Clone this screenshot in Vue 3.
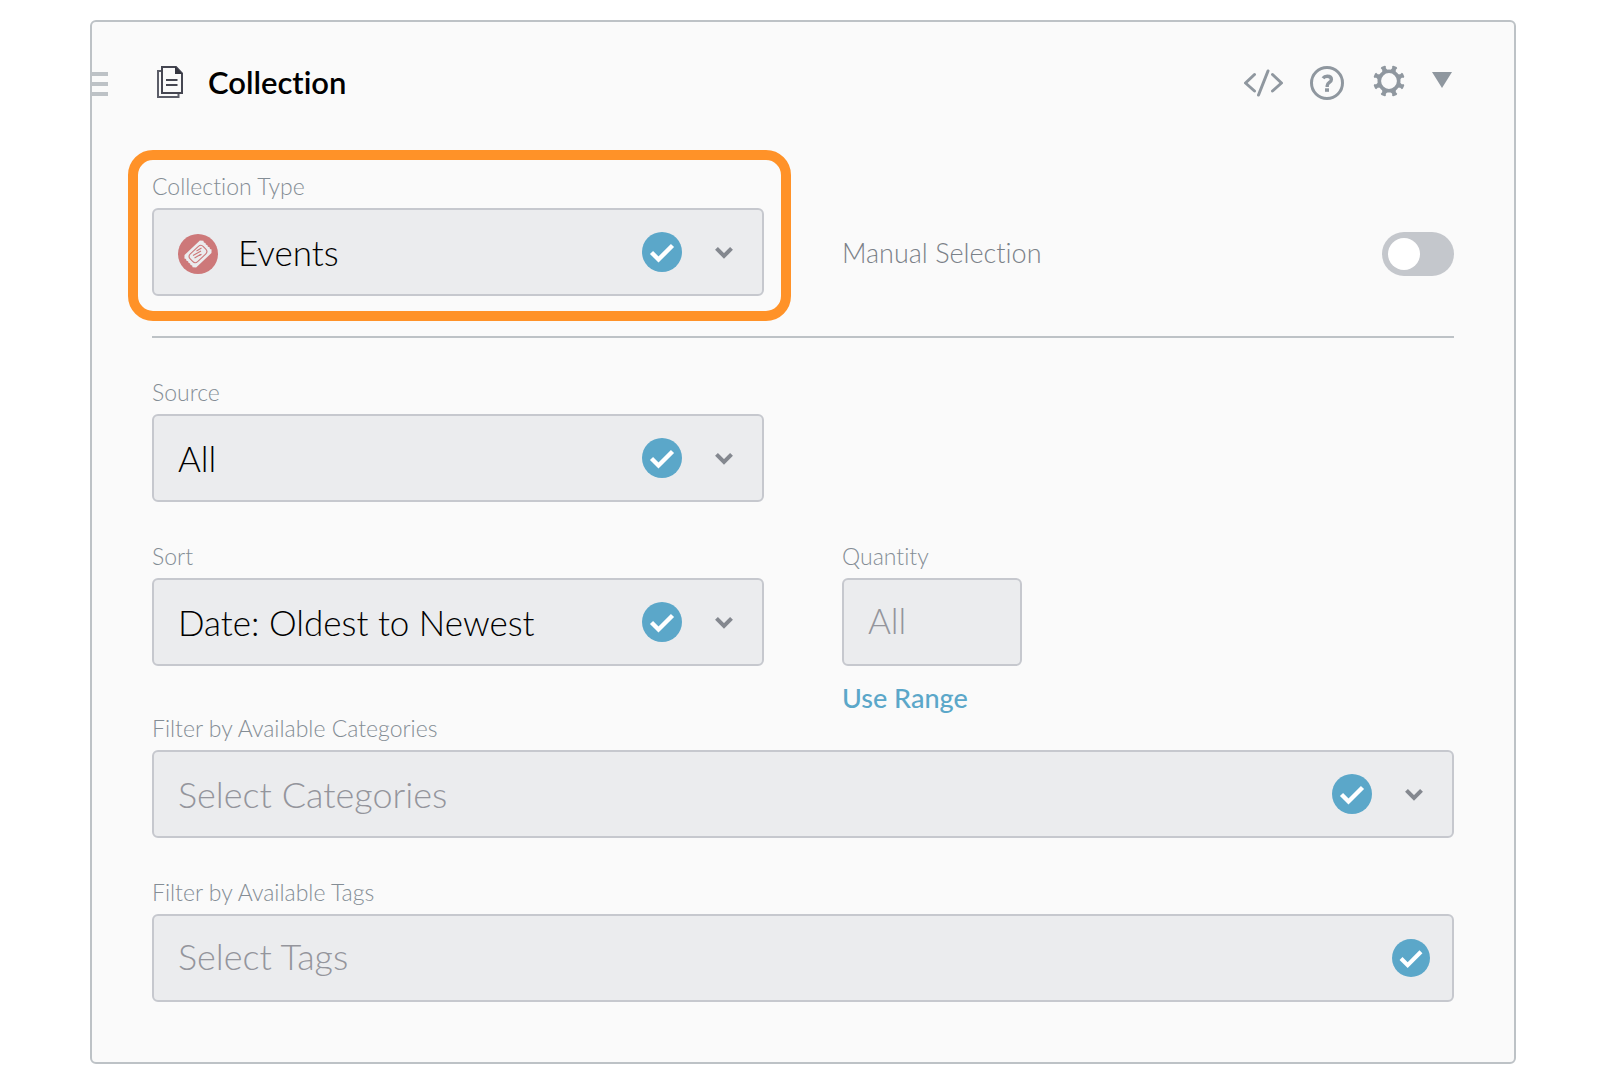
<script setup>
import { ref } from 'vue'

const collectionType = ref('events')
const source = ref('all')
const sort = ref('date-asc')
const category = ref('')
const quantity = ref('')
const tags = ref('')
const manual = ref(false)
const teeth = [0, 1, 2, 3, 4, 5, 6, 7].map((n) => n * 45 + 22.5)
</script>

<template>
  <section class="card" aria-labelledby="card-title">
    <header class="header">
      <button class="drag" type="button" aria-label="Reorder">
        <span></span><span></span><span></span>
      </button>
      <svg class="doc" width="26" height="32" viewBox="0 0 26 32" fill="none" aria-hidden="true">
        <path d="M4.500 5H1v26h20.500v-3.500" stroke="#5b5d68" stroke-width="2" />
        <path d="M5 1h14l6 6.500V27H5z" stroke="#454651" stroke-width="2" />
        <path d="M18 0.500V8h7.500z" fill="#353640" />
        <path d="M9 14h11.500M9 19h11.500" stroke="#454651" stroke-width="2" />
      </svg>
      <h1 id="card-title" class="title">Collection</h1>
      <div class="actions">
        <button class="icon-button" type="button" aria-label="View code">
          <svg width="40" height="28" viewBox="0 0 40 28" fill="none" stroke="#8f979f" stroke-width="3" stroke-linecap="round" stroke-linejoin="round">
            <path d="M10.500 5.500 1.500 14l9 8M28.500 5.500l9 8.500-9 8M24 2 14.500 26" />
          </svg>
        </button>
        <button class="icon-button help" type="button" aria-label="Help">
          <svg width="34" height="34" viewBox="0 0 34 34" fill="none" stroke="#8f979f">
            <circle cx="17" cy="17" r="15.500" stroke-width="3" />
            <path d="M13 12.300C14 10.900 15.400 10.300 17.200 10.300c2.600 0 4.200 1.200 4.200 3.200 0 3-4.200 3-4.200 6.300V21" stroke-width="3.400" />
            <path d="M17 22.300v3.500" stroke-width="4" />
          </svg>
        </button>
        <button class="icon-button gear" type="button" aria-label="Settings">
          <svg width="32" height="32" viewBox="-16 -16 32 32">
            <circle r="9.700" fill="none" stroke="#8f979f" stroke-width="3.600" />
            <path v-for="a in teeth" :key="a" d="M-3-10-2-13-2.700-15-1.700-15.800H1.700L2.700-15 2-13 3-10z" fill="#8f979f" :transform="`rotate(${a})`" />
          </svg>
        </button>
        <button class="icon-button collapse" type="button" aria-label="Collapse">
          <svg width="20" height="16" viewBox="0 0 20 16"><path d="M0 0h20L10 16z" fill="#8f979f" /></svg>
        </button>
      </div>
    </header>

    <form class="form" @submit.prevent>
      <div class="row type-row">
        <div class="field highlighted">
          <label for="type">Collection Type</label>
          <div class="control">
            <select id="type" v-model="collectionType" class="with-icon">
              <option value="events">Events</option>
            </select>
            <svg class="ticket" width="40" height="40" viewBox="0 0 40 40" aria-hidden="true">
              <circle cx="20" cy="20" r="20" fill="#cd7879" />
              <g transform="translate(20 20) rotate(-43)">
                <path d="M-10.500-8.500H10.500L13-6l-.8 1.500L13-3l-.8 1.500L13 0l-.8 1.500L13 3l-.8 1.500L13 6 10.500 8.500h-21L-13 6l.8-1.500L-13 3l.8-1.500L-13 0l.8-1.500L-13-3l.8-1.500L-13-6z" fill="#ebecee" />
                <rect x="-9" y="-5.300" width="18" height="10.600" rx="3.500" fill="none" stroke="#cd7879" stroke-width="1.100" />
              </g>
              <path d="m15 21.500 8-4.500M16.500 24l6-3.500M18.500 17l5-3M21.500 21.500l2-1.200" stroke="#cd7879" stroke-width="1.100" />
            </svg>
            <span class="marks">
              <svg class="check" viewBox="0 0 40 40" aria-hidden="true"><circle cx="20" cy="20" r="20" fill="#5ba7c9" /><path d="m9.500 20.500 7 7L30.500 13.500" fill="none" stroke="#fff" stroke-width="4.400" /></svg>
              <svg class="chevron" width="18" height="13" viewBox="0 0 18 13" aria-hidden="true"><path d="m1.500 2.300 7.500 7.700 7.500-7.700" fill="none" stroke="#84888f" stroke-width="4" /></svg>
            </span>
          </div>
        </div>
        <div class="manual">
          <label for="manual">Manual Selection</label>
          <input id="manual" v-model="manual" class="toggle" type="checkbox" role="switch" />
        </div>
      </div>

      <hr class="divider" />

      <div class="row">
        <div class="field">
          <label for="source">Source</label>
          <div class="control">
            <select id="source" v-model="source">
              <option value="all">All</option>
            </select>
            <span class="marks">
              <svg class="check" viewBox="0 0 40 40" aria-hidden="true"><circle cx="20" cy="20" r="20" fill="#5ba7c9" /><path d="m9.500 20.500 7 7L30.500 13.500" fill="none" stroke="#fff" stroke-width="4.400" /></svg>
              <svg class="chevron" width="18" height="13" viewBox="0 0 18 13" aria-hidden="true"><path d="m1.500 2.300 7.500 7.700 7.500-7.700" fill="none" stroke="#84888f" stroke-width="4" /></svg>
            </span>
          </div>
        </div>
      </div>

      <div class="row sort-row">
        <div class="field">
          <label for="sort">Sort</label>
          <div class="control">
            <select id="sort" v-model="sort">
              <option value="date-asc">Date: Oldest to Newest</option>
            </select>
            <span class="marks">
              <svg class="check" viewBox="0 0 40 40" aria-hidden="true"><circle cx="20" cy="20" r="20" fill="#5ba7c9" /><path d="m9.500 20.500 7 7L30.500 13.500" fill="none" stroke="#fff" stroke-width="4.400" /></svg>
              <svg class="chevron" width="18" height="13" viewBox="0 0 18 13" aria-hidden="true"><path d="m1.500 2.300 7.500 7.700 7.500-7.700" fill="none" stroke="#84888f" stroke-width="4" /></svg>
            </span>
          </div>
        </div>
        <div class="field">
          <label for="quantity">Quantity</label>
          <div class="control quantity">
            <input id="quantity" v-model="quantity" type="text" placeholder="All" />
          </div>
          <a class="range" href="#range">Use Range</a>
        </div>
      </div>

      <div class="field">
        <label for="categories">Filter by Available Categories</label>
        <div class="control">
          <select id="categories" v-model="category" class="wide" :class="{ empty: !category }">
            <option value="">Select Categories</option>
          </select>
          <span class="marks">
            <svg class="check" viewBox="0 0 40 40" aria-hidden="true"><circle cx="20" cy="20" r="20" fill="#5ba7c9" /><path d="m9.500 20.500 7 7L30.500 13.500" fill="none" stroke="#fff" stroke-width="4.400" /></svg>
            <svg class="chevron" width="18" height="13" viewBox="0 0 18 13" aria-hidden="true"><path d="m1.500 2.300 7.500 7.700 7.500-7.700" fill="none" stroke="#84888f" stroke-width="4" /></svg>
          </span>
        </div>
      </div>

      <div class="field tags">
        <label for="tags">Filter by Available Tags</label>
        <div class="control">
          <input id="tags" v-model="tags" class="wide" type="text" placeholder="Select Tags" />
          <span class="marks">
            <svg class="check small" viewBox="0 0 40 40" aria-hidden="true"><circle cx="20" cy="20" r="20" fill="#5ba7c9" /><path d="m9.500 20.500 7 7L30.500 13.500" fill="none" stroke="#fff" stroke-width="4.400" /></svg>
          </span>
        </div>
      </div>
    </form>
  </section>
</template>

<style>
body {
  background: #fff;
}
</style>

<style scoped>
.card,
.card * {
  box-sizing: border-box;
}

.card {
  margin: 20px 96px 22px 90px;
  padding: 40px 0 60px;
  border: 2px solid #bdc2c6;
  border-radius: 6px;
  background: #fafafa;
  font-family: Lato, "Liberation Sans", sans-serif;
  font-weight: 300;
  font-variant-ligatures: none;
}

.header {
  display: flex;
  align-items: center;
  height: 42px;
  padding-right: 62px;
}

button {
  display: flex;
  padding: 0;
  border: 0;
  background: none;
  cursor: pointer;
}

.drag {
  flex-direction: column;
  gap: 6px;
  width: 16px;
  margin-top: 2px;
}

.drag span {
  width: 16px;
  height: 4px;
  background: #bdc2c6;
}

.doc {
  margin: 0 0 2px 49px;
}

.title {
  margin: 0 0 2px 25px;
  font-size: 31px;
  line-height: 36px;
  font-weight: 600;
  color: #000;
}

.actions {
  display: flex;
  align-items: center;
  margin-left: auto;
}

.help {
  margin-left: 26px;
}

.gear {
  margin: 0 0 4px 29px;
}

.collapse {
  margin: 0 0 6px 27px;
}

.form {
  padding: 67px 60px 0;
}

.row {
  display: grid;
  grid-template-columns: 1fr 1fr;
  column-gap: 78px;
}

.sort-row {
  margin-top: 39px;
}

.field label {
  display: block;
  margin-bottom: 7px;
  font-size: 23px;
  line-height: 30px;
  color: #848d95;
}

.highlighted {
  position: relative;
}

.highlighted::after {
  content: "";
  position: absolute;
  inset: -21px -27px -25px -24px;
  border: 10px solid #ff9228;
  border-radius: 25px;
  pointer-events: none;
}

.control {
  display: grid;
  height: 88px;
}

.control > * {
  grid-area: 1 / 1;
}

.quantity {
  width: 180px;
}

select,
input[type="text"] {
  appearance: none;
  width: 100%;
  height: 88px;
  margin: 0;
  padding: 0 24px;
  border: 2px solid #c6c8ce;
  border-radius: 6px;
  background: #ebecee;
  font: inherit;
  font-variant-ligatures: none;
  font-size: 35px;
  color: #000;
}

input[type="text"] {
  padding-bottom: 4px;
}

select.wide,
input.wide {
  font-size: 36px;
}

.with-icon {
  padding-left: 84px;
}

.empty,
input::placeholder {
  color: #94959c;
  opacity: 1;
}

.ticket {
  align-self: center;
  margin: 4px 0 0 26px;
  pointer-events: none;
}

.marks {
  display: flex;
  align-items: center;
  align-self: center;
  justify-self: end;
  gap: 33px;
  margin-right: 31px;
  pointer-events: none;
}

.check {
  width: 40px;
  height: 40px;
}

.tags .marks {
  margin-right: 24px;
}

.check.small {
  width: 38px;
  height: 38px;
}

.manual {
  display: flex;
  align-items: center;
  justify-content: space-between;
  align-self: end;
  height: 84px;
}

.manual label {
  padding-bottom: 2px;
  font-size: 27px;
  line-height: 32px;
  color: #7a8188;
}

.toggle {
  appearance: none;
  width: 72px;
  height: 44px;
  margin: 0;
  padding: 6px;
  border-radius: 22px;
  background: #c4c7cc;
}

.toggle::before {
  content: "";
  display: block;
  width: 32px;
  height: 32px;
  border-radius: 50%;
  background: #fff;
}

.toggle:checked {
  background: #5ba7c9;
}

.toggle:checked::before {
  margin-left: auto;
}

.divider {
  height: 2px;
  margin: 40px 0 39px;
  border: 0;
  background: #bdc2c6;
}

.range {
  display: block;
  width: fit-content;
  margin-top: 17px;
  font-size: 27px;
  line-height: 30px;
  font-weight: 500;
  color: #5ba7c9;
  text-decoration: none;
}

.tags {
  margin-top: 39px;
}
</style>
